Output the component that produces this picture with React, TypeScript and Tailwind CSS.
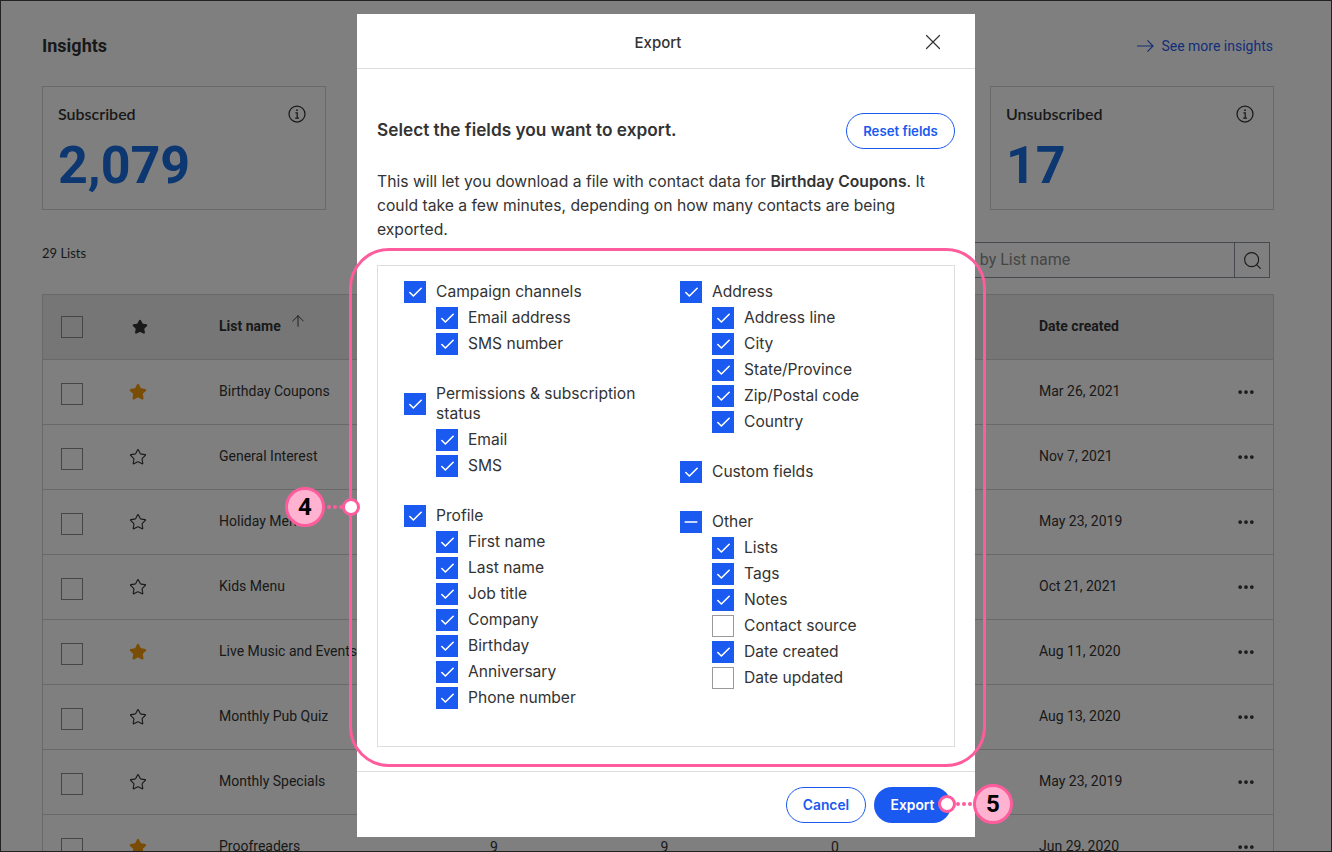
import { Check, Minus, X, Search, ArrowUp, Star, MoreHorizontal } from "lucide-react";

const roboto = { fontFamily: "Roboto, sans-serif" };

type Field = { label: string; checked?: boolean };
type FieldGroup = { label: string; mixed?: boolean; children?: Field[] };

const onFields = (labels: string[]): Field[] => labels.map((label) => ({ label, checked: true }));

const leftGroups: FieldGroup[] = [
  { label: "Campaign channels", children: onFields(["Email address", "SMS number"]) },
  { label: "Permissions & subscription status", children: onFields(["Email", "SMS"]) },
  {
    label: "Profile",
    children: onFields(["First name", "Last name", "Job title", "Company", "Birthday", "Anniversary", "Phone number"]),
  },
];

const rightGroups: FieldGroup[] = [
  { label: "Address", children: onFields(["Address line", "City", "State/Province", "Zip/Postal code", "Country"]) },
  { label: "Custom fields" },
  {
    label: "Other",
    mixed: true,
    children: [
      { label: "Lists", checked: true },
      { label: "Tags", checked: true },
      { label: "Notes", checked: true },
      { label: "Contact source" },
      { label: "Date created", checked: true },
      { label: "Date updated" },
    ],
  },
];

const rows = [
  { name: "Birthday Coupons", fav: true, date: "Mar 26, 2021" },
  { name: "General Interest", fav: false, date: "Nov 7, 2021" },
  { name: "Holiday Menu", fav: false, date: "May 23, 2019" },
  { name: "Kids Menu", fav: false, date: "Oct 21, 2021" },
  { name: "Live Music and Events", fav: true, date: "Aug 11, 2020" },
  { name: "Monthly Pub Quiz", fav: false, date: "Aug 13, 2020" },
  { name: "Monthly Specials", fav: false, date: "May 23, 2019" },
  { name: "Proofreaders", fav: true, date: "Jun 29, 2020", counts: ["9", "9", "0"] },
];

const countCols = ["col-start-3", "col-start-4", "col-start-5"];

function InfoIcon() {
  return (
    <svg viewBox="0 0 18 18" fill="none" stroke="currentColor" strokeWidth="1.25" className="size-[18px] text-[#333]" aria-hidden>
      <circle cx="9" cy="9" r="8" />
      <path d="M7.4 7.9H9.2V12.9M7.2 13H11" />
      <circle cx="9" cy="5.2" r="0.9" fill="currentColor" stroke="none" />
    </svg>
  );
}

function FieldBox({ checked, mixed }: { checked?: boolean; mixed?: boolean }) {
  if (mixed) {
    return (
      <span className="flex size-[22px] shrink-0 items-center justify-center bg-[#1a5af0] text-white">
        <Minus className="size-[20px]" strokeWidth={1.75} />
      </span>
    );
  }
  if (checked) {
    return (
      <span className="flex size-[22px] shrink-0 items-center justify-center bg-[#1a5af0] text-white">
        <Check className="size-[17px]" strokeWidth={2.25} />
      </span>
    );
  }
  return <span className="size-[22px] shrink-0 border border-[#9a9a9a] bg-white" />;
}

function FieldColumn({ groups }: { groups: FieldGroup[] }) {
  return (
    <div className="flex w-[276px] shrink-0 flex-col gap-7">
      {groups.map((group) => (
        <div key={group.label} className="flex flex-col gap-1">
          <div className="flex items-center gap-2.5 pr-2">
            <FieldBox checked mixed={group.mixed} />
            <span className="py-px leading-5">{group.label}</span>
          </div>
          {group.children?.map((field) => (
            <div key={field.label} className="flex h-[22px] items-center gap-2.5 pl-8">
              <FieldBox checked={field.checked} />
              <span className="leading-5">{field.label}</span>
            </div>
          ))}
        </div>
      ))}
    </div>
  );
}

function StatCard({ label, value }: { label?: string; value?: string }) {
  return (
    <div className="h-[124px] border border-[#d2d2d2] px-[15px] pt-[17px]">
      {label ? (
        <>
          <div className="flex items-center justify-between pr-[4px]">
            <span className="text-base leading-5 font-semibold text-[#333]" style={{ fontFamily: "Lato, sans-serif" }}>
              {label}
            </span>
            <InfoIcon />
          </div>
          <div className="mt-[12px] text-[52px] leading-[60px] font-bold text-[#1a6ee0]">{value}</div>
        </>
      ) : null}
    </div>
  );
}

function ExportModal() {
  return (
    <div className="absolute top-[14px] left-[357px] flex h-[823px] w-[618px] flex-col bg-white text-[#333]" style={{ fontFamily: "Inter, sans-serif" }}>
      <div className="relative flex h-[55px] shrink-0 items-center justify-center border-b border-[#dedede] pt-[5px] pr-4">
        <span className="text-[15px] font-medium">Export</span>
        <X className="absolute top-[15px] right-[29px] size-[26px]" strokeWidth={1.1} />
      </div>

      <div className="flex min-h-0 flex-1 flex-col px-5 pt-11">
        <div className="flex items-center justify-between">
          <h2 className="pb-0.5 text-[17.25px] font-semibold">Select the fields you want to export.</h2>
          <button className="h-9 w-[109px] rounded-full border border-[#1a5af0] pt-0.5 text-[13.2px] font-semibold text-[#1a5af0]">
            Reset fields
          </button>
        </div>
        <p className="mt-[21px] text-[15.7px] leading-6">
          This will let you download a file with contact data for <b className="font-semibold">Birthday Coupons</b>. It could
          take a few minutes, depending on how many contacts are being exported.
        </p>
        <div className="mt-[23px] flex h-[482px] border border-[#dedede] pt-[15px] pl-[26px] text-[15.6px]">
          <FieldColumn groups={leftGroups} />
          <FieldColumn groups={rightGroups} />
        </div>
      </div>

      <div className="flex h-[66px] shrink-0 items-center justify-end gap-2 border-t border-[#dedede] pr-6">
        <button className="h-9 w-20 rounded-full border border-[#1a5af0] pt-0.5 text-[13.8px] font-semibold text-[#1a5af0]">Cancel</button>
        <button className="h-9 w-[77px] rounded-full bg-[#1a5af0] pt-0.5 text-[13.8px] font-semibold text-white">Export</button>
      </div>
    </div>
  );
}

function Callout({ n, className }: { n: number; className: string }) {
  return (
    <div
      className={`absolute flex size-[40px] items-center justify-center rounded-full border-[3px] border-[#ff5c9d] bg-[#ffb3d1] text-2xl font-bold text-black ${className}`}
      style={roboto}
    >
      {n}
    </div>
  );
}

export default function App() {
  return (
    <div className="relative h-[852px] w-[1332px] overflow-hidden bg-white text-[#333]" style={roboto}>
      <div className="pt-[34px] pr-[58px] pl-[42px]">
        <div className="flex h-6 items-center justify-between pr-px">
          <h1 className="text-lg font-bold">Insights</h1>
          <a className="flex items-center gap-[7px] text-sm text-[#2b5df0]">
            <svg viewBox="0 0 18 14" fill="none" stroke="currentColor" strokeWidth="1.25" className="h-[14px] w-[17px]" aria-hidden>
              <path d="M0 7H17M11 1L17 7L11 13" />
            </svg>
            See more insights
          </a>
        </div>

        <div className="mt-[28px] grid grid-cols-4 gap-8">
          <StatCard label="Subscribed" value="2,079" />
          <StatCard />
          <StatCard />
          <StatCard label="Unsubscribed" value="17" />
        </div>

        <div className="mt-[32px] flex h-9 items-start justify-between pr-[4px]">
          <span className="mt-px text-[13px] leading-5" style={{ fontFamily: "Lato, sans-serif" }}>
            29 Lists
          </span>
          <div className="flex h-9 w-[343px] border border-[#8c949c]">
            <span className="flex-1 pl-3 text-base leading-[34px] whitespace-nowrap text-[#8c8c8c]">Filter by List name</span>
            <span className="flex w-[35px] items-center justify-center border-l border-[#8c949c]">
              <Search className="size-[21px]" strokeWidth={1.25} />
            </span>
          </div>
        </div>

        <div className="mt-4 border-x border-t border-[#d2d2d2] text-sm">
          <div className="grid h-[65px] grid-cols-[176px_190px_170px_171px_170px_119px_189px_1fr] items-center border-b border-[#d2d2d2] bg-[#ececec]">
            <span className="col-start-1 row-start-1 ml-[18px] size-[22px] border border-[#8c8c8c]" />
            <span className="col-start-1 row-start-1 ml-[89px]">
              <Star className="size-[16px] fill-[#333] text-[#333]" />
            </span>
            <span className="col-start-2 row-start-1 mb-0.5 flex items-center gap-2 font-bold">
              List name
              <ArrowUp className="mb-2.5 size-[18px]" strokeWidth={1.25} />
            </span>
            <span className="col-start-7 row-start-1 mb-0.5 font-bold">Date created</span>
          </div>
          {rows.map((row) => (
            <div
              key={row.name}
              className="grid h-[65px] grid-cols-[176px_190px_170px_171px_170px_119px_189px_1fr] items-center border-b border-[#d2d2d2]"
            >
              <span className="col-start-1 row-start-1 mt-[3px] ml-[18px] size-[22px] border border-[#8c8c8c]" />
              <span className="col-start-1 row-start-1 ml-[86px]">
                {row.fav ? (
                  <Star className="size-[18px] fill-[#f59a0c] text-[#f59a0c]" />
                ) : (
                  <Star className="size-[18px]" strokeWidth={1.5} />
                )}
              </span>
              <span className="col-start-2 row-start-1 mb-0.5 whitespace-nowrap">{row.name}</span>
              {row.counts?.map((count, i) => (
                <span key={i} className={`${countCols[i]} row-start-1 text-center`}>
                  {count}
                </span>
              ))}
              <span className="col-start-7 row-start-1 mb-0.5">{row.date}</span>
              <span className="col-start-8 row-start-1 ml-2">
                <MoreHorizontal className="size-5" strokeWidth={2.5} />
              </span>
            </div>
          ))}
        </div>
      </div>

      {/* dim layer under the dialog */}
      <div className="absolute inset-0 border border-[#222] bg-black/50" />

      <ExportModal />

      {/* annotation ring and callouts */}
      <div className="absolute top-[248px] left-[349px] h-[519px] w-[637px] rounded-[40px] border-[3px] border-[#ff5c9d]" />
      <Callout n={4} className="top-[487px] left-[285px]" />
      <div className="absolute top-[505px] left-[327px] w-[16px] border-t-4 border-dotted border-[#ff5c9d]" />
      <div className="absolute top-[498px] left-[342px] size-[18px] rounded-full border-[3px] border-[#ff5c9d] bg-white" />
      <Callout n={5} className="top-[784px] left-[973px]" />
      <div className="absolute top-[802px] left-[956px] w-[16px] border-t-4 border-dotted border-[#ff5c9d]" />
      <div className="absolute top-[795px] left-[938px] size-[18px] rounded-full border-[3px] border-[#ff5c9d] bg-white" />
    </div>
  );
}
